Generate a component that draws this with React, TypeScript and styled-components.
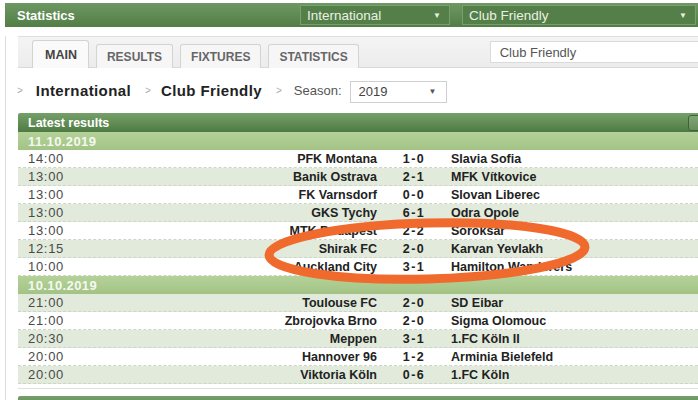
import React from 'react';
import styled, { createGlobalStyle } from 'styled-components';

const Global = createGlobalStyle`
  html, body { margin: 0; padding: 0; background: #fff; }
  body { width: 698px; height: 400px; overflow: hidden; font-family: "Liberation Sans", Arial, sans-serif; }
  #root { width: 698px; height: 400px; overflow: hidden; }
`;

const Page = styled.div`
  position: relative;
  width: 698px;
  height: 400px;
  overflow: hidden;
  padding-top: 3px;
  box-sizing: border-box;
`;

const TopBar = styled.div`
  margin-left: 5px;
  width: 730px;
  height: 24px;
  display: flex;
  align-items: center;
  background: linear-gradient(#6e9862, #527d45);
`;

const BarTitle = styled.div`
  width: 295px;
  box-sizing: border-box;
  padding-left: 12px;
  color: #fff;
  font-weight: bold;
  font-size: 13px;
`;

const BarSelect = styled.div<{ $w: number }>`
  width: ${p => p.$w}px;
  height: 20px;
  box-sizing: border-box;
  margin-right: 12px;
  padding: 0 8px 0 6px;
  display: flex;
  align-items: center;
  justify-content: space-between;
  background: #547f48;
  border: 1px solid #7a9f6e;
  color: #e9f1e4;
  font-size: 13.5px;
`;

const Arrow = styled.span<{ $c: string }>`
  font-size: 8px;
  color: ${p => p.$c};
`;

const Panel = styled.div`
  margin-left: 5px;
  border-left: 1px solid #dcdcdc;
  padding-left: 12px;
  width: 720px;
  height: 373px;
  box-sizing: border-box;
`;

const TabStrip = styled.div`
  margin-top: 9px;
  height: 32px;
  box-sizing: border-box;
  display: flex;
  align-items: flex-end;
  gap: 7px;
  padding-left: 14px;
  background: linear-gradient(#f4f4f4, #ececec);
  border-top: 1px solid #dedede;
  border-bottom: 1px solid #d9d9d9;
`;

const Tab = styled.div<{ $active?: boolean }>`
  height: ${p => (p.$active ? 28 : 24)}px;
  box-sizing: border-box;
  padding: 0 ${p => (p.$active ? 11 : 10)}px 0 ${p => (p.$active ? 12 : 10)}px;
  display: flex;
  align-items: center;
  border: 1px solid #d3d3d3;
  border-bottom: none;
  border-radius: 3px 3px 0 0;
  background: ${p => (p.$active ? '#fafafa' : '#f6f6f6')};
  color: ${p => (p.$active ? '#444' : '#666')};
  font-weight: bold;
  font-size: ${p => (p.$active ? 12.5 : 12)}px;
  margin-bottom: -1px;
`;

const Search = styled.div`
  align-self: flex-start;
  margin-top: 4px;
  margin-left: 124px;
  width: 240px;
  height: 22px;
  box-sizing: border-box;
  border: 1px solid #dadada;
  background: #fff;
  color: #555;
  font-size: 13px;
  padding-left: 9px;
  display: flex;
  align-items: center;
`;

const Crumbs = styled.div`
  height: 45px;
  display: flex;
  align-items: center;
`;

const Sep = styled.span<{ $first?: boolean }>`
  color: #aaa;
  font-size: 10px;
  margin: 0 ${p => (p.$first ? 13 : 10)}px 0 ${p => (p.$first ? -1 : 14)}px;
`;

const Crumb = styled.span`
  font-weight: bold;
  font-size: 15px;
  letter-spacing: 0.4px;
  color: #222;
`;

const SeasonLabel = styled.span`
  font-size: 13px;
  color: #555;
  margin-left: 2px;
  margin-right: 8px;
`;

const SeasonSelect = styled.div`
  width: 97px;
  height: 22px;
  box-sizing: border-box;
  border: 1px solid #cfcfcf;
  background: #fff;
  display: flex;
  align-items: center;
  justify-content: space-between;
  padding: 0 9px 0 8px;
  font-size: 13px;
  color: #444;
  margin-top: 2px;
`;

const Table = styled.div`
  width: 700px;
`;

const TableHead = styled.div`
  height: 19px;
  display: flex;
  align-items: center;
  padding-left: 10px;
  background: linear-gradient(#76a069, #4e7b43);
  border-radius: 2px 2px 0 0;
  color: #fff;
  font-weight: bold;
  font-size: 12.5px;
`;

const HeadButton = styled.div`
  margin-left: auto;
  margin-right: 6px;
  width: 22px;
  height: 14px;
  border: 1px solid #3d6334;
  border-radius: 3px;
  background: rgba(255, 255, 255, 0.12);
`;

const DateRow = styled.div`
  height: 18px;
  display: flex;
  align-items: center;
  padding-left: 10px;
  background: linear-gradient(#b4d298, #a3c386);
  color: #f4f9ef;
  font-weight: bold;
  font-size: 13px;
  letter-spacing: 0.4px;
`;

const MatchRow = styled.div<{ $alt: boolean }>`
  height: 18px;
  box-sizing: border-box;
  padding-left: 10px;
  display: grid;
  grid-template-columns: 80px 269px 74px 1fr;
  align-items: center;
  background: ${p => (p.$alt ? '#e1eadb' : '#fff')};
  border-bottom: 1px dashed #cdd6c6;
`;

const Time = styled.span`
  font-size: 13px;
  letter-spacing: 0.7px;
  color: #4a4a4a;
`;

const Team = styled.span<{ $home?: boolean }>`
  font-weight: bold;
  font-size: 12.5px;
  color: #222;
  text-align: ${p => (p.$home ? 'right' : 'left')};
  white-space: nowrap;
`;

const Score = styled.span`
  font-weight: bold;
  font-size: 12.5px;
  letter-spacing: 1.5px;
  color: #222;
  text-align: center;
`;

const TableEnd = styled.div`
  height: 4px;
  border-bottom: 1px solid #dde3d8;
`;

const NextHead = styled.div`
  margin-top: 7px;
  height: 19px;
  background: linear-gradient(#76a069, #4e7b43);
  border-radius: 2px 2px 0 0;
`;

const Overlay = styled.svg`
  position: absolute;
  left: 0;
  top: 0;
  pointer-events: none;
`;

type Match = [string, string, string, string];

const groups: { date: string; matches: Match[] }[] = [
  {
    date: '11.10.2019',
    matches: [
      ['14:00', 'PFK Montana', '1-0', 'Slavia Sofia'],
      ['13:00', 'Banik Ostrava', '2-1', 'MFK Vítkovice'],
      ['13:00', 'FK Varnsdorf', '0-0', 'Slovan Liberec'],
      ['13:00', 'GKS Tychy', '6-1', 'Odra Opole'],
      ['13:00', 'MTK Budapest', '2-2', 'Soroksár'],
      ['12:15', 'Shirak FC', '2-0', 'Karvan Yevlakh'],
      ['10:00', 'Auckland City', '3-1', 'Hamilton Wanderers'],
    ],
  },
  {
    date: '10.10.2019',
    matches: [
      ['21:00', 'Toulouse FC', '2-0', 'SD Eibar'],
      ['21:00', 'Zbrojovka Brno', '2-0', 'Sigma Olomouc'],
      ['20:30', 'Meppen', '3-1', '1.FC Köln II'],
      ['20:00', 'Hannover 96', '1-2', 'Arminia Bielefeld'],
      ['20:00', 'Viktoria Köln', '0-6', '1.FC Köln'],
    ],
  },
];

export default function App() {
  let idx = 0;
  return (
    <>
      <Global />
      <Page>
        <TopBar>
          <BarTitle>Statistics</BarTitle>
          <BarSelect $w={150}>
            <span>International</span>
            <Arrow $c="#e9f1e4">▼</Arrow>
          </BarSelect>
          <BarSelect $w={234}>
            <span>Club Friendly</span>
            <Arrow $c="#e9f1e4">▼</Arrow>
          </BarSelect>
        </TopBar>
        <Panel>
          <TabStrip>
            <Tab $active>MAIN</Tab>
            <Tab>RESULTS</Tab>
            <Tab>FIXTURES</Tab>
            <Tab>STATISTICS</Tab>
            <Search>Club Friendly</Search>
          </TabStrip>
          <Crumbs>
            <Sep $first>&gt;</Sep>
            <Crumb>International</Crumb>
            <Sep>&gt;</Sep>
            <Crumb>Club Friendly</Crumb>
            <Sep>&gt;</Sep>
            <SeasonLabel>Season:</SeasonLabel>
            <SeasonSelect>
              <span>2019</span>
              <Arrow $c="#555">▼</Arrow>
            </SeasonSelect>
          </Crumbs>
          <Table>
            <TableHead>
              Latest results
              <HeadButton />
            </TableHead>
            {groups.map(g => (
              <React.Fragment key={g.date}>
                <DateRow>{g.date}</DateRow>
                {g.matches.map((m, i) => {
                  const alt = idx++ % 2 === 1;
                  return (
                    <MatchRow key={i} $alt={alt}>
                      <Time>{m[0]}</Time>
                      <Team $home>{m[1]}</Team>
                      <Score>{m[2]}</Score>
                      <Team>{m[3]}</Team>
                    </MatchRow>
                  );
                })}
              </React.Fragment>
            ))}
            <TableEnd />
            <NextHead />
          </Table>
        </Panel>
        <Overlay width="698" height="400" viewBox="0 0 698 400">
          <ellipse
            cx="427"
            cy="251"
            rx="158"
            ry="28"
            fill="none"
            stroke="#ef6a2c"
            strokeWidth="9"
            transform="rotate(-1.5 427 251)"
          />
        </Overlay>
      </Page>
    </>
  );
}
